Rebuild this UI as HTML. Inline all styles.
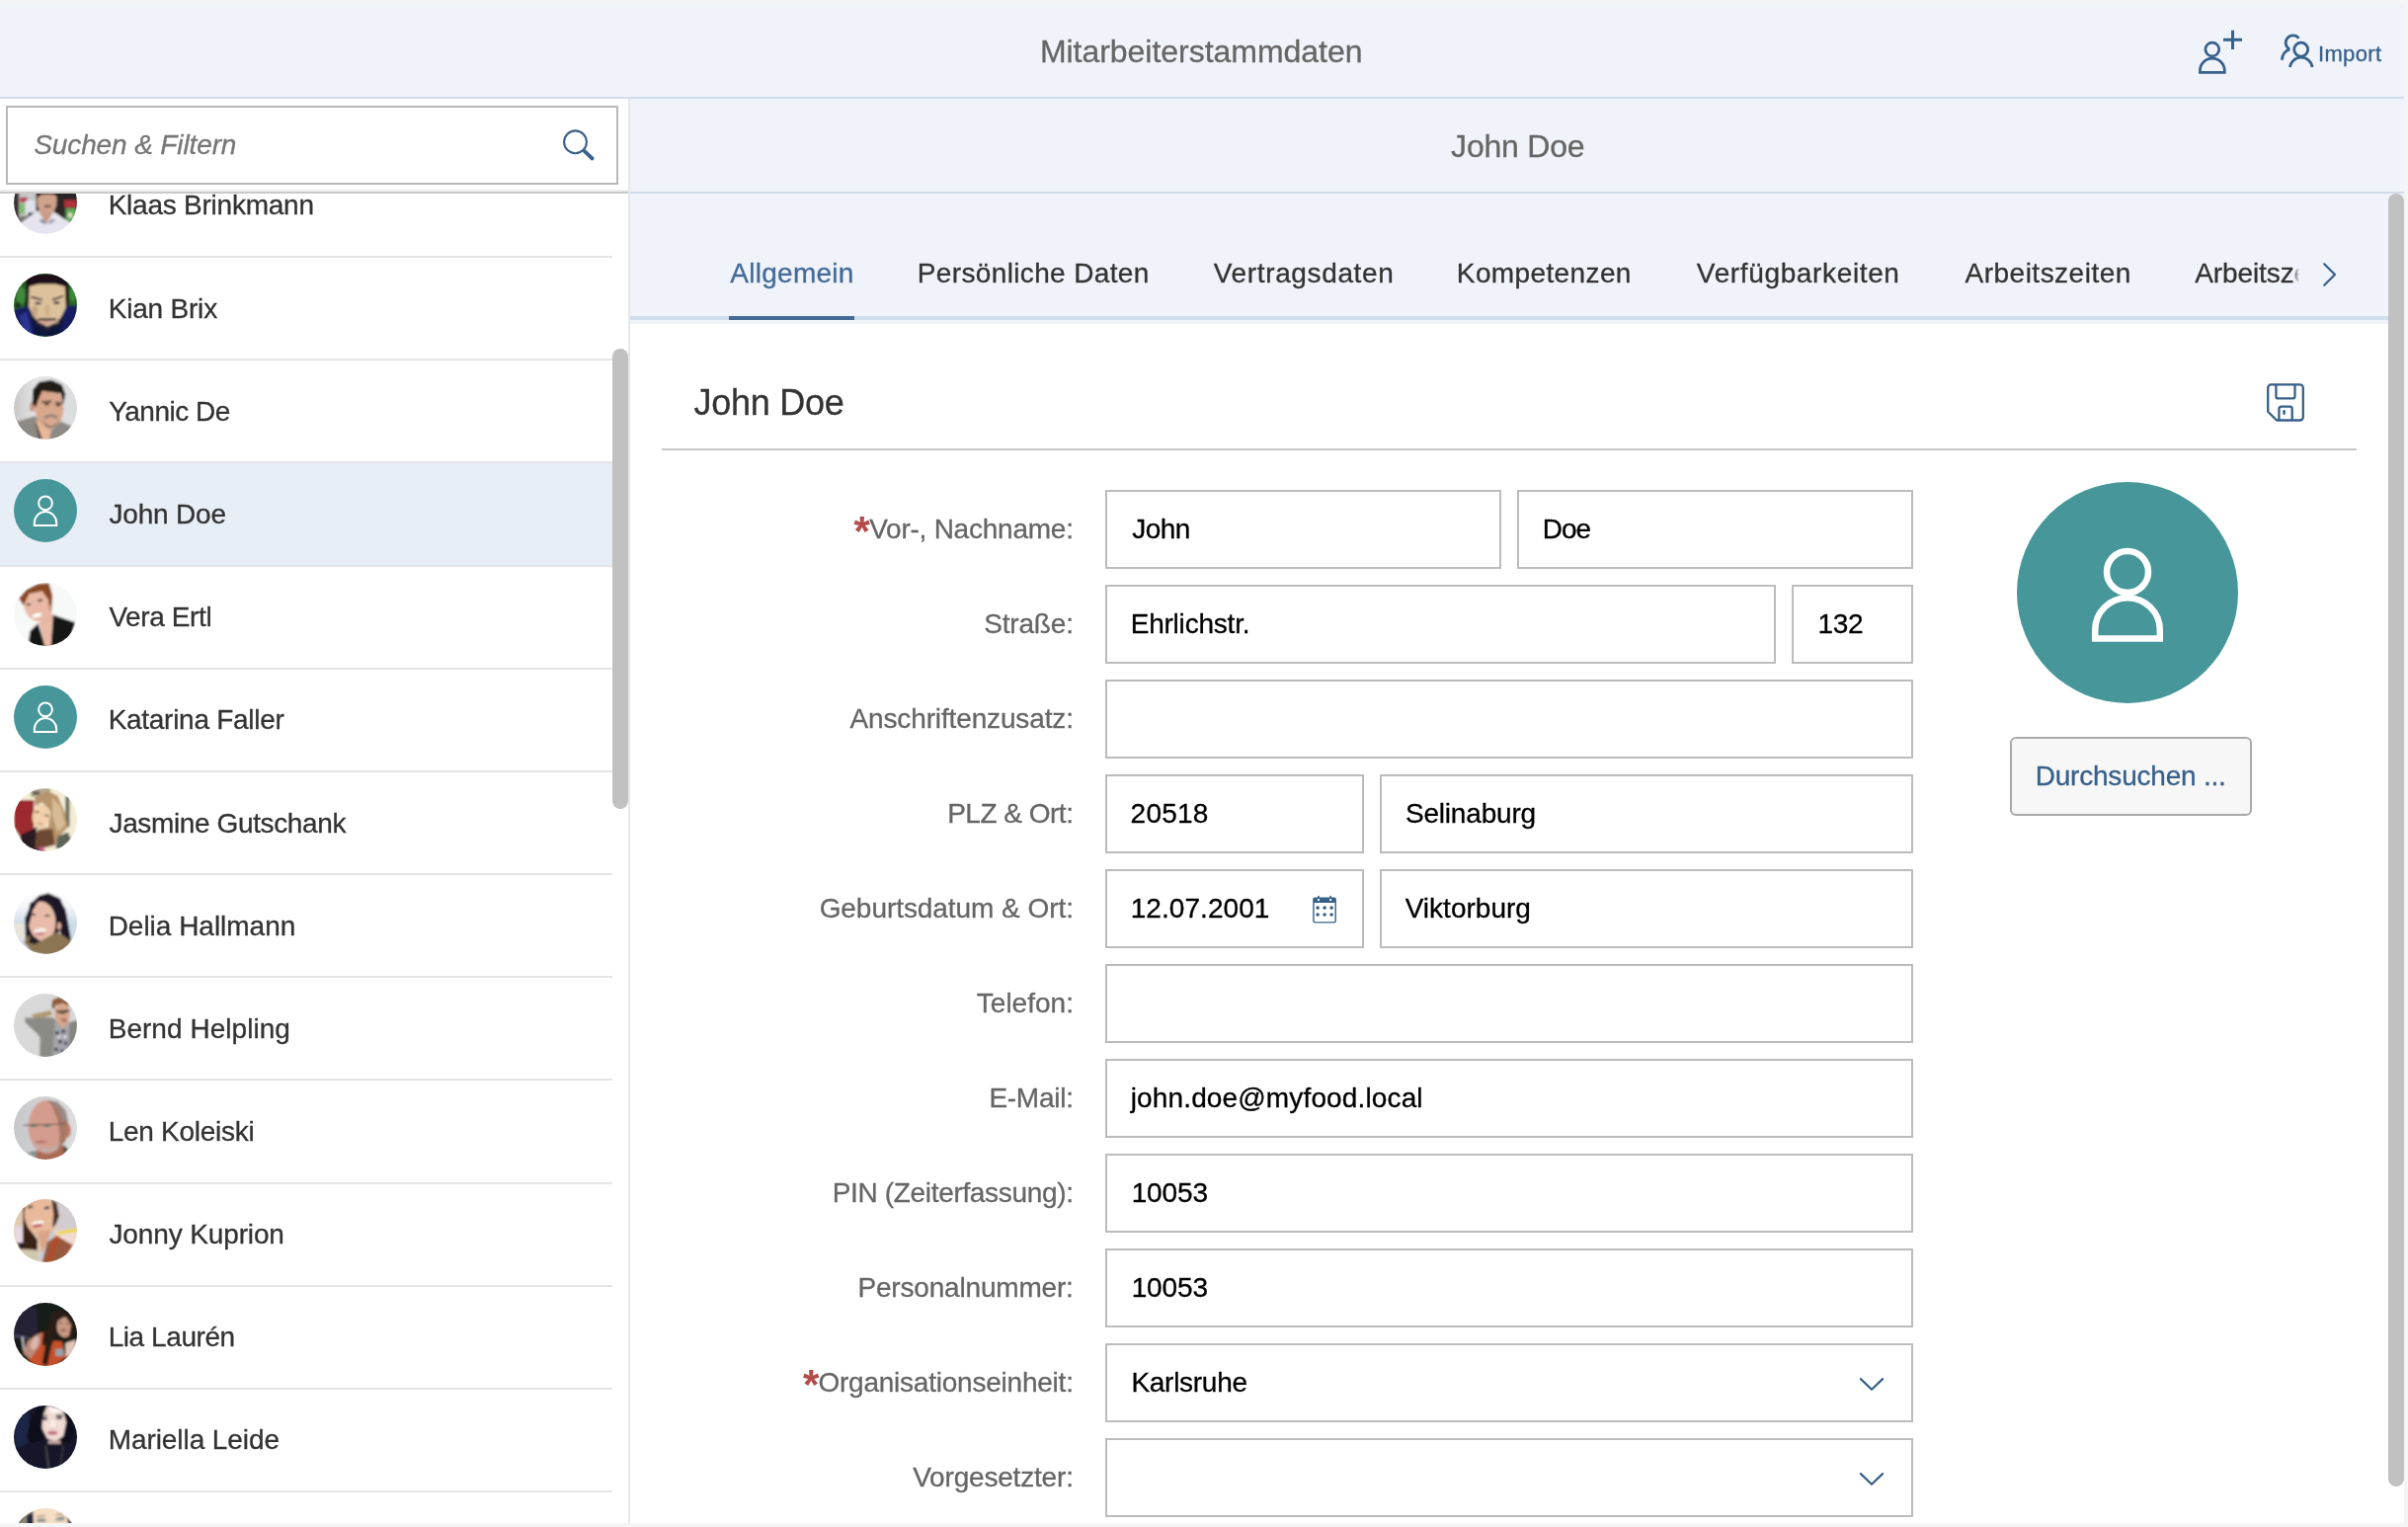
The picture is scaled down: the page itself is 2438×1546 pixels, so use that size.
<!DOCTYPE html>
<html lang="de"><head><meta charset="utf-8"><title>Mitarbeiterstammdaten</title>
<style>
html,body{margin:0;padding:0}
body{width:2438px;height:1546px;position:relative;overflow:hidden;background:#f5f5f5;font-family:"Liberation Sans", sans-serif;}
.t{position:absolute;white-space:pre;font-family:"Liberation Sans", sans-serif;-webkit-text-stroke:0.3px;}
#app{position:absolute;left:0;top:0;width:2438px;height:1546px;overflow:hidden;transform:translateZ(0)}
.a{position:absolute;font:bold 42px/50px "Liberation Sans", sans-serif;color:#b34b49}
.abs{position:absolute}
.inp{position:absolute;box-sizing:border-box;border:2px solid #bcbcbc;background:#fff;height:80px}
.sep{position:absolute;left:0;width:620px;height:2px;background:#e5e5e5}
.av{position:absolute;left:14px;width:64px;height:64px;border-radius:50%;overflow:hidden}
svg{position:absolute;overflow:visible}
</style></head><body>
<svg width="0" height="0" style="left:0;top:0"><defs><filter id="b18" x="-10%" y="-10%" width="120%" height="120%"><feGaussianBlur stdDeviation="19"/></filter><filter id="b26" x="-10%" y="-10%" width="120%" height="120%"><feGaussianBlur stdDeviation="30"/></filter></defs></svg>
<div id="app">

<div style="position:absolute;left:0px;top:4px;width:2434px;height:96px;background:#f0f3f9;"></div>
<div style="position:absolute;left:0px;top:98px;width:2434px;height:2px;background:#d0dcec;"></div>
<div style="position:absolute;left:0px;top:100px;width:636px;height:1442px;background:#fff;"></div>
<div style="position:absolute;left:638px;top:100px;width:1796px;height:96px;background:#f0f3f9;"></div>
<div style="position:absolute;left:638px;top:194px;width:1796px;height:2px;background:#d0dcec;"></div>
<div style="position:absolute;left:638px;top:196px;width:1796px;height:132px;background:#f0f3f9;"></div>
<div style="position:absolute;left:638px;top:320px;width:1780px;height:4px;background:#d1deee;"></div>
<div style="position:absolute;left:638px;top:328px;width:1796px;height:1214px;background:#fff;"></div>
<div style="position:absolute;left:636px;top:100px;width:2px;height:1442px;background:#e8e8e8;"></div>
<span class="t " style="left:1052.93px;top:31.91px;font-size:32px;line-height:40px;color:#666;letter-spacing:-0.036px;">Mitarbeiterstammdaten</span>
<span class="t " style="left:1469.12px;top:128.21px;font-size:32px;line-height:40px;color:#666;letter-spacing:-0.223px;">John Doe</span>
<span class="t " style="left:2346.94px;top:40.98px;font-size:22px;line-height:28px;color:#37608a;letter-spacing:0.367px;">Import</span>
<svg style="left:2220px;top:24px" width="60" height="60" viewBox="2220 24 60 60" fill="none" stroke="#37608a" stroke-width="2.7">
<circle cx="2239.8" cy="50" r="6.9"/>
<path d="M2227.4 73.4 V71.6 A12.45 12.45 0 0 1 2252.3 71.6 V73.4 Z" stroke-linejoin="miter"/>
<path d="M2251 40.3 H2270 M2260.5 30.8 V50" stroke-width="3"/>
</svg>
<svg style="left:2300px;top:24px" width="60" height="60" viewBox="2300 24 60 60" fill="none" stroke="#37608a" stroke-width="2.8">
<circle cx="2329.7" cy="50.1" r="7"/>
<path d="M2318.5 68 A11.4 11.4 0 0 1 2341.1 68"/>
<path d="M2327.43 38.74 A7.4 7.4 0 1 0 2318.24 49.89"/>
<path d="M2310.4 60.7 A11.6 11.6 0 0 1 2318.24 49.89"/>
</svg>
<div class="abs" style="left:6px;top:107px;width:620px;height:80px;box-sizing:border-box;border:2px solid #b9b9b9;background:#fff"></div>
<div style="position:absolute;left:0px;top:192px;width:636px;height:2px;background:#ebebeb;"></div>
<div style="position:absolute;left:0px;top:194px;width:636px;height:2px;background:#c9c9c9;"></div>
<span class="t " style="left:34.30px;top:129.30px;font-size:28px;line-height:35px;color:#767676;letter-spacing:-0.126px;font-style:italic;">Suchen &amp; Filtern</span>
<svg style="left:560px;top:120px" width="50" height="50" viewBox="560 120 50 50" fill="none" stroke="#37608a">
<circle cx="582.5" cy="143.8" r="11.4" stroke-width="2.1"/>
<path d="M591.6 152.9 L599.6 160.5" stroke-width="3.8" stroke-linecap="round"/>
</svg>
<div class="abs" id="list" style="left:0;top:196px;width:636px;height:1346px;overflow:hidden">
<div class="sep" style="top:63px"></div>
<div class="av" style="top:-23.2px"><svg style="left:0;top:0" width="64" height="64" viewBox="240.8 -698.3199999999997 1926.4 1926.4" preserveAspectRatio="none"><g filter="url(#b26)"><rect x="200" y="-720" width="2000" height="2000" fill="#3a3030"/><rect x="400" y="-700" width="520" height="1500" fill="#c9c9c9"/><rect x="430" y="110" width="230" height="150" fill="#b83a48"/><rect x="420" y="290" width="150" height="320" fill="#7dbd6a"/><rect x="600" y="200" width="300" height="420" fill="#dfe2ea"/><rect x="680" y="580" width="200" height="130" fill="#15151a"/><rect x="420" y="680" width="500" height="220" fill="#7a7472"/><rect x="1500" y="-700" width="700" height="1600" fill="#2a2628"/><rect x="1780" y="190" width="360" height="230" fill="#b0303c"/><rect x="1820" y="440" width="330" height="440" fill="#5fa85a"/><ellipse cx="1960" cy="650" rx="70" ry="80" fill="#e8e0c8"/><path d="M300 1000 L470 880 L940 520 L1450 540 L1930 870 L2200 1000 L2200 1300 L300 1300 Z" fill="#e6e4ee" /><ellipse cx="1250" cy="220" rx="300" ry="420" fill="#cfa28c"/><path d="M1000 560 L1250 900 L1440 560 Z" fill="#c79a86" /><path d="M880 -200 L1600 -200 L1560 60 L1400 20 L1100 20 L950 120 Z" fill="#2a1e1a" /><path d="M1010 800 L1150 760 L1250 930 L1100 900 Z" fill="#8a8aa0" /><path d="M1250 930 L1400 760 L1520 800 L1400 900 Z" fill="#9a9ab0" /><ellipse cx="1270" cy="380" rx="110" ry="35" fill="#5a2a28"/></g></svg></div>
<div class="sep" style="top:167px"></div>
<div class="av" style="top:81.0px"><svg style="left:0;top:0" width="64" height="64" viewBox="153 170 1221 1222" preserveAspectRatio="none"><g filter="url(#b18)"><rect x="100" y="100" width="1400" height="1400" fill="#2c6428"/><ellipse cx="290" cy="600" rx="90" ry="170" fill="#3f8a3a"/><ellipse cx="1290" cy="560" rx="60" ry="150" fill="#3f8a3a"/><ellipse cx="230" cy="780" rx="60" ry="60" fill="#1d3a1a"/><path d="M390 170 L1200 170 L1215 800 L1130 800 L1100 440 L950 380 L640 380 L490 440 L470 820 L375 820 Z" fill="#1a0c14" /><path d="M153 870 L430 790 L800 1280 L1170 790 L1374 790 L1374 1392 L153 1392 Z" fill="#191f5e" /><path d="M480 950 L800 1300 L1120 950 L1040 1392 L560 1392 Z" fill="#10143a" /><path d="M250 1000 L400 900 L520 1392 L350 1300 Z" fill="#2a3590" /><path d="M450 420 L640 370 L950 370 L1140 420 L1160 820 L1020 1120 L800 1250 L600 1120 L440 820 Z" fill="#dcc29c" /><path d="M430 780 L520 1050 L800 1285 L1080 1050 L1170 780 L1110 960 L980 1110 L800 1190 L640 1110 L500 960 Z" fill="#2c2230" /><ellipse cx="800" cy="880" rx="45" ry="120" fill="#cdae88"/><ellipse cx="560" cy="900" rx="60" ry="120" fill="#c8a684"/><ellipse cx="620" cy="745" rx="62" ry="24" fill="#30243a"/><ellipse cx="980" cy="735" rx="62" ry="24" fill="#30243a"/><path d="M480 640 L700 695 L705 660 L500 605 Z" fill="#33242c" /><path d="M900 695 L1115 620 L1105 590 L890 660 Z" fill="#33242c" /><path d="M615 1035 L975 1035 L965 1075 L625 1075 Z" fill="#35222a" /><ellipse cx="790" cy="1115" rx="105" ry="28" fill="#d89a98"/></g></svg></div>
<div class="sep" style="top:271px"></div>
<div class="av" style="top:185.1px"><svg style="left:0;top:0" width="64" height="64" viewBox="153 170 1221 1222" preserveAspectRatio="none"><g filter="url(#b18)"><defs><linearGradient id="gy" x1="0" x2="1"><stop offset="0" stop-color="#c4c4c4"/><stop offset=".35" stop-color="#e6e6e6"/><stop offset="1" stop-color="#d8d9dc"/></linearGradient></defs><rect x="100" y="100" width="1400" height="1400" fill="url(#gy)"/><path d="M200 1050 L560 940 L900 1200 L1060 1040 L1260 1130 L1300 1392 L200 1392 Z" fill="#8d8985" /><path d="M560 1000 L900 1160 L830 1392 L700 1392 Z" fill="#e8b898" /><path d="M560 1000 L640 1392 L700 1392 L600 1100 Z" fill="#4a3a38" /><ellipse cx="830" cy="760" rx="280" ry="420" fill="#d8a78c" transform="rotate(-6 830 760)"/><ellipse cx="505" cy="760" rx="45" ry="90" fill="#c4907a"/><path d="M510 700 L520 430 L640 280 L880 240 L1080 330 L1150 520 L1110 700 L1060 500 L700 450 L620 640 L580 760 Z" fill="#201b19" /><path d="M740 940 L870 900 L1000 940 L990 990 L870 950 L750 990 Z" fill="#8a7e78" /><path d="M700 1000 L760 1150 L880 1190 L1000 1120 L1020 980 L960 1100 L860 1130 L770 1080 Z" fill="#9a8478" /><ellipse cx="790" cy="710" rx="50" ry="22" fill="#3a2a24"/><ellipse cx="1010" cy="730" rx="50" ry="22" fill="#3a2a24"/><path d="M690 650 L880 640 L880 670 L690 680 Z" fill="#2a201c" /><path d="M950 660 L1100 680 L1100 705 L950 690 Z" fill="#2a201c" /></g></svg></div>
<div class="abs" style="left:0;top:273px;width:620px;height:103px;background:#e8eef6"></div>
<div class="sep" style="top:376px"></div>
<div class="av" style="top:289.3px;background:#47979a"><svg style="left:0;top:0" width="64" height="64" viewBox="0 0 64 64" fill="none" stroke="#fff" stroke-width="2"><circle cx="32" cy="24.3" r="6.9"/><path d="M20.8 47.1 V44.3 A11.2 11.2 0 0 1 43.2 44.3 V47.1 Z"/></svg></div>
<div class="sep" style="top:480px"></div>
<div class="av" style="top:393.5px"><svg style="left:0;top:0" width="64" height="64" viewBox="153 170 1221 1222" preserveAspectRatio="none"><g filter="url(#b18)"><rect x="100" y="100" width="1400" height="1400" fill="#f7f8f8"/><path d="M440 1290 L470 1100 L620 960 L760 1392 L860 1392 L910 790 L1340 940 L1250 1250 L900 1420 L500 1420 Z" fill="#141416" /><path d="M640 940 L900 760 L905 900 L870 1392 L750 1392 Z" fill="#e9bba6" /><path d="M650 800 L880 700 L900 900 L700 980 Z" fill="#e6b5a2" /><ellipse cx="600" cy="610" rx="250" ry="320" fill="#e9b9a6" transform="rotate(-22 600 610)"/><path d="M250 470 L400 300 L620 190 L830 175 L900 420 L880 720 L840 720 L820 500 L700 330 L450 380 L340 610 Z" fill="#8a4a24" /><ellipse cx="600" cy="800" rx="95" ry="38" fill="#fdfdfd" transform="rotate(-18 600 800)"/><ellipse cx="440" cy="590" rx="45" ry="20" fill="#4a3028" transform="rotate(-20 440 590)"/><ellipse cx="660" cy="510" rx="50" ry="22" fill="#4a3028" transform="rotate(-20 660 510)"/><ellipse cx="860" cy="660" rx="30" ry="60" fill="#c8a078"/></g></svg></div>
<div class="sep" style="top:584px"></div>
<div class="av" style="top:497.6px;background:#47979a"><svg style="left:0;top:0" width="64" height="64" viewBox="0 0 64 64" fill="none" stroke="#fff" stroke-width="2"><circle cx="32" cy="24.3" r="6.9"/><path d="M20.8 47.1 V44.3 A11.2 11.2 0 0 1 43.2 44.3 V47.1 Z"/></svg></div>
<div class="sep" style="top:688px"></div>
<div class="av" style="top:601.8px"><svg style="left:0;top:0" width="64" height="64" viewBox="153 150 1221 1222" preserveAspectRatio="none"><g filter="url(#b18)"><rect x="100" y="100" width="1400" height="1400" fill="#f4edd6"/><rect x="480" y="150" width="380" height="170" fill="#b0a890"/><rect x="520" y="220" width="130" height="50" fill="#3a3a34"/><rect x="1150" y="300" width="80" height="600" fill="#6a6a5c"/><path d="M153 380 L540 380 L540 1000 L270 1080 L153 900 Z" fill="#9c2c2e" /><path d="M560 330 L800 200 L1000 300 L1130 600 L1200 900 L1050 1060 L950 1250 L600 1330 L480 1250 L620 950 L820 900 L860 600 L700 420 L560 500 Z" fill="#b8946c" /><path d="M900 330 L1050 500 L1150 850 L1000 1000 L900 700 Z" fill="#d6bc94" /><path d="M620 960 L900 940 L950 1250 L620 1330 L480 1250 Z" fill="#6e4a30" /><ellipse cx="680" cy="700" rx="170" ry="235" fill="#f1d2ac" transform="rotate(8 680 700)"/><path d="M270 1060 L600 900 L560 1300 L760 1372 L700 1420 L300 1300 Z" fill="#2a1a22" /><path d="M1000 1080 L1200 1000 L1260 1150 L1050 1340 L960 1300 Z" fill="#5c645a" /><ellipse cx="600" cy="610" rx="40" ry="16" fill="#5a3a30"/><ellipse cx="790" cy="680" rx="45" ry="16" fill="#5a3a30" transform="rotate(20 790 680)"/><ellipse cx="660" cy="840" rx="60" ry="18" fill="#d08a88" transform="rotate(10 660 840)"/><path d="M640 1290 L740 1290 L740 1372 L640 1372 Z" fill="#c85a90" /></g></svg></div>
<div class="sep" style="top:792px"></div>
<div class="av" style="top:705.9px"><svg style="left:0;top:0" width="64" height="64" viewBox="153 150 1221 1222" preserveAspectRatio="none"><g filter="url(#b18)"><defs><linearGradient id="gd" x1="0" x2="0" y1="0" y2="1"><stop offset="0" stop-color="#ffffff"/><stop offset=".25" stop-color="#f6f6fa"/><stop offset=".5" stop-color="#cddbe8"/><stop offset="1" stop-color="#d8dde6"/></linearGradient></defs><rect x="100" y="100" width="1400" height="1400" fill="url(#gd)"/><rect x="153" y="780" width="230" height="300" fill="#e8e4dc"/><path d="M820 195 L1050 300 L1170 600 L1260 1100 L1100 1260 L900 1200 L480 1180 L380 1100 L370 680 L500 380 L640 240 Z" fill="#1b1926" /><ellipse cx="700" cy="740" rx="262" ry="385" fill="#e8bca9" transform="rotate(-4 700 740)"/><path d="M880 330 L1000 560 L1010 800 L1000 1000 L1100 1240 L1230 1000 L1150 500 L1000 280 Z" fill="#1b1926" /><path d="M470 380 L640 330 L520 520 L450 800 L400 700 Z" fill="#1b1926" /><ellipse cx="1030" cy="830" rx="40" ry="75" fill="#dba898"/><path d="M350 1150 L440 1000 L560 1180 L1000 940 L1260 1120 L1280 1300 L900 1420 L500 1330 Z" fill="#8b7452" /><path d="M430 1150 L560 1180 L640 1100 L500 1000 Z" fill="#241c28" /><ellipse cx="665" cy="915" rx="120" ry="40" fill="#fbf6f4" transform="rotate(-6 665 915)"/><ellipse cx="660" cy="975" rx="90" ry="28" fill="#c87a88" transform="rotate(-6 660 975)"/><ellipse cx="530" cy="610" rx="55" ry="18" fill="#3a2a2a"/><ellipse cx="800" cy="630" rx="55" ry="18" fill="#3a2a2a"/><ellipse cx="1040" cy="960" rx="14" ry="30" fill="#e8e8f0"/></g></svg></div>
<div class="sep" style="top:896px"></div>
<div class="av" style="top:810.1px"><svg style="left:0;top:0" width="64" height="64" viewBox="153 150 1221 1222" preserveAspectRatio="none"><g filter="url(#b18)"><rect x="100" y="100" width="1400" height="1400" fill="#d8d9d8"/><path d="M480 560 L860 470 L900 560 L600 650 Z" fill="#b09a70" /><path d="M360 620 L900 610 L960 650 L900 1420 L650 1420 L660 1000 L600 920 L380 720 Z" fill="#8b8b85" /><path d="M1230 700 L1390 660 L1390 1050 L1180 1280 Z" fill="#85857f" /><path d="M950 650 L1230 700 L1210 1250 L900 1400 Z" fill="#a4a4aa" /><path d="M950 650 L1100 830 L1230 700 Z" fill="#d6a48c" /><rect x="960" y="880" width="60" height="60" fill="#2a3048"/><rect x="1080" y="850" width="60" height="60" fill="#2a3048"/><rect x="1020" y="1050" width="60" height="60" fill="#2a3048"/><rect x="1130" y="1080" width="50" height="60" fill="#2a3048"/><rect x="940" y="1200" width="60" height="60" fill="#2a3048"/><rect x="1060" y="1230" width="50" height="50" fill="#2a3048"/><rect x="1000" y="960" width="50" height="50" fill="#e8e8e8"/><rect x="1120" y="960" width="50" height="50" fill="#e8e8e8"/><ellipse cx="1090" cy="540" rx="150" ry="205" fill="#d8a88e"/><path d="M880 400 L900 270 L1030 215 L1190 300 L1220 400 L1100 330 L960 380 L930 470 Z" fill="#8a5a38" /><path d="M960 480 L1240 460 L1240 485 L1110 545 L990 520 Z" fill="#5a4a40" /><path d="M1050 620 L1190 640 L1180 700 L1090 700 Z" fill="#a87860" /></g></svg></div>
<div class="sep" style="top:1001px"></div>
<div class="av" style="top:914.2px"><svg style="left:0;top:0" width="64" height="64" viewBox="153 150 1221 1222" preserveAspectRatio="none"><g filter="url(#b18)"><defs><linearGradient id="gl" x1="0" x2="1"><stop offset="0" stop-color="#c6c7c9"/><stop offset="1" stop-color="#e0e0e0"/></linearGradient></defs><rect x="100" y="100" width="1400" height="1400" fill="url(#gl)"/><path d="M580 1200 L1120 1100 L1200 1420 L560 1420 Z" fill="#a86c54" /><path d="M400 1250 L560 1200 L600 1340 L520 1300 Z" fill="#7c8c8c" /><path d="M1110 1090 L1200 1170 L1130 1260 Z" fill="#2e382e" /><ellipse cx="1190" cy="810" rx="65" ry="140" fill="#c07e66"/><ellipse cx="800" cy="740" rx="370" ry="520" fill="#d49c8c"/><path d="M800 225 L1000 260 L1150 420 L1200 650 L1160 1000 L1000 1200 L1040 900 L1000 600 L900 350 Z" fill="#a87866" /><path d="M820 225 L1000 260 L1150 420 L1200 640 L1100 620 L1020 400 Z" fill="#9a8a88" /><path d="M520 1000 L620 1180 L800 1240 L980 1180 L1060 1020 L900 1150 L700 1150 Z" fill="#c0aca8" /><ellipse cx="530" cy="715" rx="70" ry="30" fill="#5a8a70"/><ellipse cx="800" cy="715" rx="70" ry="30" fill="#5a8a70"/><path d="M340 700 L1150 670 L1150 690 L340 725 Z" fill="#6a5a58" /><ellipse cx="680" cy="1030" rx="110" ry="22" fill="#b06868"/></g></svg></div>
<div class="sep" style="top:1105px"></div>
<div class="av" style="top:1018.3px"><svg style="left:0;top:0" width="64" height="64" viewBox="153 170 1221 1222" preserveAspectRatio="none"><g filter="url(#b18)"><rect x="100" y="100" width="1400" height="1400" fill="#e2cab2"/><path d="M900 170 L1374 170 L1374 760 L1000 800 L960 500 Z" fill="#d2ccd0" /><path d="M950 780 L1374 740 L1374 1100 L1000 900 Z" fill="#f0dcd4" /><path d="M1000 800 L1370 730 L1370 800 L1000 860 Z" fill="#efd63e" /><path d="M153 700 L330 700 L330 1030 L200 1030 Z" fill="#e8d8e0" /><path d="M330 330 L520 260 L420 700 L610 960 L610 1160 L240 1130 L330 1000 Z" fill="#3a2418" /><path d="M220 1020 L330 1010 L330 1140 L260 1120 Z" fill="#1e1a26" /><path d="M280 1140 L610 1170 L640 1360 L420 1300 Z" fill="#cfc8ae" /><ellipse cx="660" cy="500" rx="300" ry="390" fill="#e9b99b" transform="rotate(-12 660 500)"/><path d="M880 175 L980 240 L1030 500 L960 660 L900 730 L920 450 Z" fill="#4a3020" /><path d="M880 760 L960 800 L700 1392 L610 1340 Z" fill="#c9cdd6" /><path d="M700 1392 L800 1000 L980 880 L1290 1060 L1150 1290 L850 1420 Z" fill="#98593b" /><path d="M960 880 L1040 900 L860 1392 L790 1392 Z" fill="#b84a2a" /><path d="M600 800 L880 760 L800 1000 L700 1200 Z" fill="#d9a488" /><ellipse cx="620" cy="630" rx="120" ry="42" fill="#fbf8f0" transform="rotate(-8 620 630)"/><ellipse cx="610" cy="680" rx="100" ry="30" fill="#c0505a" transform="rotate(-8 610 680)"/><ellipse cx="470" cy="320" rx="55" ry="26" fill="#4a4a40" transform="rotate(-15 470 320)"/><ellipse cx="790" cy="340" rx="55" ry="28" fill="#3a4a5a" transform="rotate(-10 790 340)"/></g></svg></div>
<div class="sep" style="top:1209px"></div>
<div class="av" style="top:1122.5px"><svg style="left:0;top:0" width="64" height="64" viewBox="153 170 1221 1222" preserveAspectRatio="none"><g filter="url(#b18)"><rect x="100" y="100" width="1400" height="1400" fill="#131a14"/><path d="M153 300 L600 250 L620 800 L153 820 Z" fill="#252036" /><path d="M153 780 L450 830 L450 870 L153 830 Z" fill="#4a4868" /><path d="M640 760 L730 740 L700 1000 L950 900 L1090 920 L1150 1230 L900 1420 L560 1380 L420 1250 Z" fill="#c7502c" /><path d="M600 780 L690 760 L660 1000 L470 1260 L330 1150 L420 900 Z" fill="#b88878" /><ellipse cx="560" cy="950" rx="70" ry="140" fill="#dbb8aa" transform="rotate(20 560 950)"/><path d="M1150 950 L1350 880 L1330 1150 L1150 1230 Z" fill="#e0c6b6" /><ellipse cx="1130" cy="640" rx="150" ry="200" fill="#c99a82" transform="rotate(-8 1130 640)"/><path d="M880 360 L1100 300 L1290 450 L1340 700 L1300 850 L1200 900 L1260 600 L1150 430 L1000 520 L960 780 L880 1000 L800 1380 L700 1350 L760 1000 L720 800 L820 600 Z" fill="#2a1c18" /><rect x="960" y="1060" width="150" height="140" fill="#9aa2ac"/><path d="M300 830 L335 830 L365 1090 L335 1090 Z" fill="#d4d4d4" /><ellipse cx="1110" cy="700" rx="60" ry="20" fill="#8a4a4a"/><ellipse cx="1060" cy="560" rx="30" ry="12" fill="#2a1c18"/><ellipse cx="1190" cy="580" rx="30" ry="12" fill="#2a1c18"/></g></svg></div>
<div class="sep" style="top:1313px"></div>
<div class="av" style="top:1226.7px"><svg style="left:0;top:0" width="64" height="64" viewBox="153 170 1221 1222" preserveAspectRatio="none"><g filter="url(#b18)"><rect x="100" y="100" width="1400" height="1400" fill="#15182a"/><path d="M153 400 L450 300 L420 900 L200 1000 Z" fill="#1d2546" /><path d="M770 165 L1120 250 L1165 500 L1110 760 L960 860 L800 810 L695 610 L690 350 Z" fill="#f1dbd4" /><path d="M830 175 L1080 240 L1000 330 L850 300 Z" fill="#fbf3ef" /><path d="M820 845 L1050 845 L1065 910 L815 910 Z" fill="#c9aaa2" /><path d="M600 200 L800 165 L725 350 L690 600 L800 830 L500 900 L400 800 L500 400 Z" fill="#11111a" /><path d="M1100 260 L1250 420 L1330 700 L1250 900 L1060 870 L1125 750 L1170 500 Z" fill="#11111a" /><ellipse cx="900" cy="700" rx="100" ry="36" fill="#c2687a"/><ellipse cx="745" cy="430" rx="62" ry="26" fill="#2a2430"/><ellipse cx="1030" cy="410" rx="62" ry="26" fill="#353040"/><path d="M700 370 L800 350 L800 375 L700 395 Z" fill="#2a2430" /><path d="M960 340 L1100 350 L1100 375 L960 365 Z" fill="#2a2430" /><path d="M880 450 L935 450 L950 610 L860 610 Z" fill="#fbf0ec" /><ellipse cx="905" cy="620" rx="60" ry="18" fill="#dcb4ac"/><path d="M760 950 L780 950 L840 1385 L815 1385 Z" fill="#5c5c52" /><path d="M1095 950 L1112 950 L1070 1300 L1050 1300 Z" fill="#4a4a44" /></g></svg></div>
<div class="sep" style="top:1417px"></div>
<div class="av" style="top:1330.8px"><svg style="left:0;top:0" width="64" height="64" viewBox="240.8 629.0900000000028 1926.4 1926.4" preserveAspectRatio="none"><g filter="url(#b26)"><rect x="200" y="500" width="2100" height="2100" fill="#f5dec4"/><path d="M240 1100 L500 900 L820 720 L850 1200 L240 1200 Z" fill="#24283c" /><path d="M380 1100 L520 900 L640 820 L640 1200 L380 1200 Z" fill="#8a8478" /><path d="M1870 900 L2020 1090 L2020 1200 L1900 1200 Z" fill="#1c2030" /><ellipse cx="1080" cy="1000" rx="150" ry="60" fill="#8a9494"/><ellipse cx="1660" cy="950" rx="150" ry="60" fill="#8a9494" transform="rotate(-8 1660 950)"/><path d="M930 870 L1200 840 L1200 870 L930 900 Z" fill="#8a6a58" /><path d="M1520 810 L1750 790 L1750 820 L1520 840 Z" fill="#8a6a58" /></g></svg></div>
</div>
<span class="t " style="left:109.66px;top:189.65px;font-size:28px;line-height:35px;color:#333;letter-spacing:-0.237px;">Klaas Brinkmann</span>
<span class="t " style="left:109.66px;top:294.80px;font-size:28px;line-height:35px;color:#333;letter-spacing:-0.195px;">Kian Brix</span>
<span class="t " style="left:110.16px;top:398.95px;font-size:28px;line-height:35px;color:#333;letter-spacing:-0.479px;">Yannic De</span>
<span class="t " style="left:110.50px;top:503.10px;font-size:28px;line-height:35px;color:#333;letter-spacing:-0.182px;">John Doe</span>
<span class="t " style="left:110.39px;top:607.25px;font-size:28px;line-height:35px;color:#333;letter-spacing:-0.393px;">Vera Ertl</span>
<span class="t " style="left:109.66px;top:711.40px;font-size:28px;line-height:35px;color:#333;letter-spacing:-0.285px;">Katarina Faller</span>
<span class="t " style="left:110.50px;top:815.55px;font-size:28px;line-height:35px;color:#333;letter-spacing:-0.375px;">Jasmine Gutschank</span>
<span class="t " style="left:109.66px;top:919.70px;font-size:28px;line-height:35px;color:#333;letter-spacing:-0.018px;">Delia Hallmann</span>
<span class="t " style="left:109.66px;top:1023.85px;font-size:28px;line-height:35px;color:#333;letter-spacing:0.045px;">Bernd Helpling</span>
<span class="t " style="left:109.66px;top:1128.00px;font-size:28px;line-height:35px;color:#333;letter-spacing:-0.265px;">Len Koleiski</span>
<span class="t " style="left:110.50px;top:1232.15px;font-size:28px;line-height:35px;color:#333;letter-spacing:-0.132px;">Jonny Kuprion</span>
<span class="t " style="left:109.66px;top:1336.30px;font-size:28px;line-height:35px;color:#333;letter-spacing:-0.427px;">Lia Laurén</span>
<span class="t " style="left:109.66px;top:1440.45px;font-size:28px;line-height:35px;color:#333;letter-spacing:-0.069px;">Mariella Leide</span>
<div style="position:absolute;left:620px;top:353px;width:16px;height:466px;background:#c1c1c1;border-radius:8px"></div>
<span class="t " style="left:739.25px;top:258.80px;font-size:28px;line-height:35px;color:#436a99;letter-spacing:0.277px;">Allgemein</span>
<span class="t " style="left:928.85px;top:258.80px;font-size:28px;line-height:35px;color:#333;letter-spacing:0.353px;">Persönliche Daten</span>
<span class="t " style="left:1228.87px;top:258.80px;font-size:28px;line-height:35px;color:#333;letter-spacing:0.634px;">Vertragsdaten</span>
<span class="t " style="left:1474.85px;top:258.80px;font-size:28px;line-height:35px;color:#333;letter-spacing:0.378px;">Kompetenzen</span>
<span class="t " style="left:1717.87px;top:258.80px;font-size:28px;line-height:35px;color:#333;letter-spacing:0.639px;">Verfügbarkeiten</span>
<span class="t " style="left:1989.55px;top:258.80px;font-size:28px;line-height:35px;color:#333;letter-spacing:0.490px;">Arbeitszeiten</span>
<div class="abs" style="left:2200px;top:240px;width:128px;height:70px;overflow:hidden;-webkit-mask-image:linear-gradient(to right,#000 0,#000 121px,transparent 128px);mask-image:linear-gradient(to right,#000 0,#000 121px,transparent 128px)">
<span class="t " style="left:22.24px;top:18.80px;font-size:28px;line-height:35px;color:#333;letter-spacing:-0.1px;">Arbeitszeitmodelle</span>
</div>
<div style="position:absolute;left:738px;top:320px;width:127px;height:4px;background:#466c96;"></div>
<svg style="left:2340px;top:256px" width="40" height="44" viewBox="2340 256 40 44" fill="none" stroke="#37608a" stroke-width="2.2" stroke-linecap="round" stroke-linejoin="round"><path d="M2353.2 267.2 L2364 278 L2353.2 288.8"/></svg>
<span class="t " style="left:702.41px;top:385.03px;font-size:36px;line-height:45px;color:#333;letter-spacing:-0.259px;">John Doe</span>
<div style="position:absolute;left:670px;top:454px;width:1716px;height:2px;background:#c8c8c8;"></div>
<svg style="left:2288px;top:380px" width="54" height="54" viewBox="2288 380 54 54" fill="none" stroke="#37608a" stroke-width="2.3" stroke-linejoin="round">
<path d="M2299.4 389.4 H2328.6 A3.2 3.2 0 0 1 2331.8 392.6 V422.3 A3.2 3.2 0 0 1 2328.6 425.5 H2305 L2296.2 416.7 V392.6 A3.2 3.2 0 0 1 2299.4 389.4 Z"/>
<path d="M2304.4 389.4 V401.2 A2.2 2.2 0 0 0 2306.6 403.4 H2321.3 A2.2 2.2 0 0 0 2323.5 401.2 V389.4"/>
<path d="M2307.4 425.5 V413.9 A2.2 2.2 0 0 1 2309.6 411.7 H2318.5 A2.2 2.2 0 0 1 2320.7 413.9 V425.5"/>
<path d="M2312.55 416.2 V418.8" stroke-width="2.5" stroke-linecap="round"/>
</svg>
<span class="t " style="left:880.16px;top:517.50px;font-size:28px;line-height:35px;color:#666;letter-spacing:-0.238px;">Vor-, Nachname:</span>
<span class="a" style="left:864.5px;top:513.30px">*</span>
<span class="t " style="left:996.30px;top:613.50px;font-size:28px;line-height:35px;color:#666;letter-spacing:-0.197px;">Straße:</span>
<span class="t " style="left:860.55px;top:709.50px;font-size:28px;line-height:35px;color:#666;letter-spacing:-0.141px;">Anschriftenzusatz:</span>
<span class="t " style="left:959.13px;top:805.50px;font-size:28px;line-height:35px;color:#666;letter-spacing:-0.494px;">PLZ &amp; Ort:</span>
<span class="t " style="left:829.63px;top:901.50px;font-size:28px;line-height:35px;color:#666;letter-spacing:-0.057px;">Geburtsdatum &amp; Ort:</span>
<span class="t " style="left:988.81px;top:997.50px;font-size:28px;line-height:35px;color:#666;letter-spacing:0.007px;">Telefon:</span>
<span class="t " style="left:1001.38px;top:1093.50px;font-size:28px;line-height:35px;color:#666;letter-spacing:-0.262px;">E-Mail:</span>
<span class="t " style="left:842.73px;top:1189.50px;font-size:28px;line-height:35px;color:#666;letter-spacing:-0.333px;">PIN (Zeiterfassung):</span>
<span class="t " style="left:868.39px;top:1285.50px;font-size:28px;line-height:35px;color:#666;letter-spacing:-0.175px;">Personalnummer:</span>
<span class="t " style="left:828.39px;top:1381.50px;font-size:28px;line-height:35px;color:#666;letter-spacing:-0.225px;">Organisationseinheit:</span>
<span class="a" style="left:813.1px;top:1377.30px">*</span>
<span class="t " style="left:924.16px;top:1477.50px;font-size:28px;line-height:35px;color:#666;letter-spacing:-0.184px;">Vorgesetzter:</span>
<div class="inp" style="left:1119px;top:496px;width:401px"></div>
<div class="inp" style="left:1536px;top:496px;width:401px"></div>
<div class="inp" style="left:1119px;top:592px;width:679px"></div>
<div class="inp" style="left:1814px;top:592px;width:123px"></div>
<div class="inp" style="left:1119px;top:688px;width:818px"></div>
<div class="inp" style="left:1119px;top:784px;width:262px"></div>
<div class="inp" style="left:1397px;top:784px;width:540px"></div>
<div class="inp" style="left:1119px;top:880px;width:262px"></div>
<div class="inp" style="left:1397px;top:880px;width:540px"></div>
<div class="inp" style="left:1119px;top:976px;width:818px"></div>
<div class="inp" style="left:1119px;top:1072px;width:818px"></div>
<div class="inp" style="left:1119px;top:1168px;width:818px"></div>
<div class="inp" style="left:1119px;top:1264px;width:818px"></div>
<div class="inp" style="left:1119px;top:1360px;width:818px"></div>
<div class="inp" style="left:1119px;top:1456px;width:818px"></div>
<span class="t " style="left:1146.26px;top:517.50px;font-size:28px;line-height:35px;color:#000;letter-spacing:-0.564px;">John</span>
<span class="t " style="left:1561.64px;top:517.50px;font-size:28px;line-height:35px;color:#000;letter-spacing:-0.968px;">Doe</span>
<span class="t " style="left:1144.68px;top:613.50px;font-size:28px;line-height:35px;color:#000;letter-spacing:-0.210px;">Ehrlichstr.</span>
<span class="t " style="left:1840.42px;top:613.50px;font-size:28px;line-height:35px;color:#000;letter-spacing:-0.297px;">132</span>
<span class="t " style="left:1144.59px;top:805.50px;font-size:28px;line-height:35px;color:#000;letter-spacing:0.237px;">20518</span>
<span class="t " style="left:1422.90px;top:805.50px;font-size:28px;line-height:35px;color:#000;letter-spacing:-0.178px;">Selinaburg</span>
<span class="t " style="left:1144.67px;top:901.50px;font-size:28px;line-height:35px;color:#000;letter-spacing:0.064px;">12.07.2001</span>
<span class="t " style="left:1422.63px;top:901.50px;font-size:28px;line-height:35px;color:#000;letter-spacing:0.022px;">Viktorburg</span>
<span class="t " style="left:1144.74px;top:1093.50px;font-size:28px;line-height:35px;color:#000;letter-spacing:0.140px;">john.doe@myfood.local</span>
<span class="t " style="left:1145.65px;top:1189.50px;font-size:28px;line-height:35px;color:#000;letter-spacing:-0.094px;">10053</span>
<span class="t " style="left:1145.65px;top:1285.50px;font-size:28px;line-height:35px;color:#000;letter-spacing:-0.094px;">10053</span>
<span class="t " style="left:1145.38px;top:1381.50px;font-size:28px;line-height:35px;color:#000;letter-spacing:-0.274px;">Karlsruhe</span>
<svg style="left:1875px;top:1380px" width="40" height="40" viewBox="1875 20 40 40" fill="none" stroke="#37608a" stroke-width="2.2" stroke-linecap="round" stroke-linejoin="round"><path d="M1883.9 36.1 L1895 46.75 L1906.1 36.1"/></svg>
<svg style="left:1875px;top:1476px" width="40" height="40" viewBox="1875 20 40 40" fill="none" stroke="#37608a" stroke-width="2.2" stroke-linecap="round" stroke-linejoin="round"><path d="M1883.9 36.1 L1895 46.75 L1906.1 36.1"/></svg>
<svg style="left:1320px;top:900px" width="44" height="44" viewBox="1320 900 44 44" fill="#37608a" stroke="none">
<path fill-rule="evenodd" d="M1331.2 908.6 H1350.9 A2 2 0 0 1 1352.9 910.6 V932.6 A2 2 0 0 1 1350.9 934.6 H1331.2 A2 2 0 0 1 1329.2 932.6 V910.6 A2 2 0 0 1 1331.2 908.6 Z M1330.6 913.9 V932.2 A1 1 0 0 0 1331.6 933.2 H1350.5 A1 1 0 0 0 1351.5 932.2 V913.9 Z M1333.9 910 V912 H1335.9 V910 Z M1346.1 910 V912 H1348.1 V910 Z"/>
<rect x="1334" y="906.8" width="1.8" height="3.4" rx=".9"/><rect x="1346.2" y="906.8" width="1.8" height="3.4" rx=".9"/>
<circle cx="1334.1" cy="919.1" r="1.8"/><circle cx="1341.1" cy="919.1" r="1.8"/><circle cx="1348.1" cy="919.1" r="1.8"/>
<circle cx="1334.1" cy="926" r="1.8"/><circle cx="1341.1" cy="926" r="1.8"/><circle cx="1348.1" cy="926" r="1.8"/>
</svg>
<div class="abs" style="left:2042px;top:488px;width:224px;height:224px;border-radius:50%;background:#47979a"></div>
<svg style="left:2042px;top:488px" width="224" height="224" viewBox="0 0 224 224" fill="none" stroke="#fff" stroke-width="6.5"><circle cx="112" cy="91" r="21"/><path d="M79.2 158.5 V150 A32.8 32.8 0 0 1 144.8 150 V158.5 Z"/></svg>
<div class="abs" style="left:2035px;top:746px;width:245px;height:80px;box-sizing:border-box;border:2px solid #a9a9a9;border-radius:6px;background:#f7f7f7"></div>
<span class="t " style="left:2060.73px;top:767.80px;font-size:28px;line-height:35px;color:#37608a;letter-spacing:-0.212px;">Durchsuchen ...</span>
<div style="position:absolute;left:2418px;top:196px;width:16px;height:1309px;background:#c1c1c1;border-radius:8px"></div>
<div style="position:absolute;left:0px;top:0px;width:2438px;height:4px;background:#f5f5f5;"></div>
<div style="position:absolute;left:2434px;top:0px;width:4px;height:1546px;background:#f5f5f5;"></div>
<div style="position:absolute;left:0px;top:1542px;width:2438px;height:4px;background:#f5f5f5;"></div>
</div></body></html>
